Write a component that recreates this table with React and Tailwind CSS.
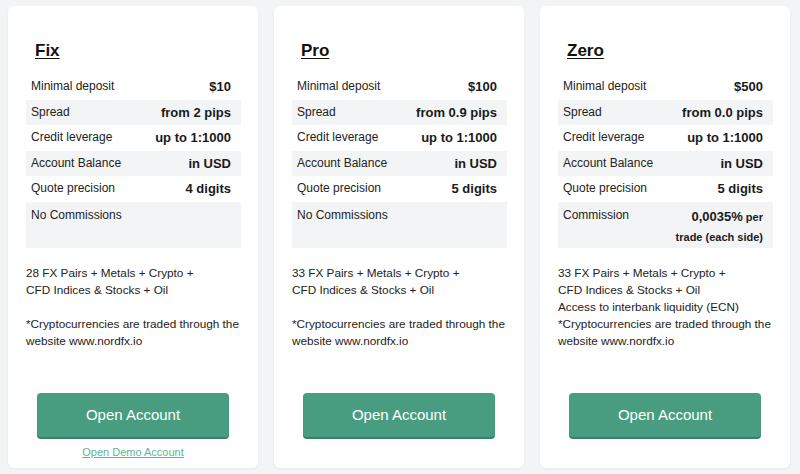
const plans = [
  {
    name: "Fix",
    deposit: "$10",
    spread: "from 2 pips",
    digits: "4 digits",
    commission: null,
    lines: ["28 FX Pairs + Metals + Crypto +", "CFD Indices & Stocks + Oil", ""],
    demo: true,
  },
  {
    name: "Pro",
    deposit: "$100",
    spread: "from 0.9 pips",
    digits: "5 digits",
    commission: null,
    lines: ["33 FX Pairs + Metals + Crypto +", "CFD Indices & Stocks + Oil", ""],
    demo: false,
  },
  {
    name: "Zero",
    deposit: "$500",
    spread: "from 0.0 pips",
    digits: "5 digits",
    commission: true,
    lines: [
      "33 FX Pairs + Metals + Crypto +",
      "CFD Indices & Stocks + Oil",
      "Access to interbank liquidity (ECN)",
    ],
    demo: false,
  },
];

function Row({ label, value, gray }) {
  return (
    <div
      className={
        "flex justify-between items-start h-[25.5px] pl-[5px] pr-[10px] pt-[5px] " +
        (gray ? "bg-[#f3f4f6]" : "")
      }
    >
      <span className="text-[12px] leading-[15px] text-[#222]">{label}</span>
      <span className="text-[13px] leading-[15px] font-bold text-[#1a1a1a]">{value}</span>
    </div>
  );
}

function Card({ plan }) {
  return (
    <div className="w-[250px] h-[462px] bg-white rounded-[6px] shadow-[0_1px_3px_rgba(0,0,0,0.05)] flex flex-col pt-[35px] px-[18px]">
      <h2 className="ml-[9px] text-[17px] leading-[20px] font-bold underline underline-offset-2 text-[#111]">
        {plan.name}
      </h2>

      <div className="mt-[13px] w-[215px]">
        <Row label="Minimal deposit" value={plan.deposit} />
        <Row label="Spread" value={plan.spread} gray />
        <Row label="Credit leverage" value="up to 1:1000" />
        <Row label="Account Balance" value="in USD" gray />
        <Row label="Quote precision" value={plan.digits} />
        <div className="flex justify-between items-start h-[46px] pl-[5px] pr-[10px] pt-[6px] bg-[#f3f4f6]">
          <span className="text-[12px] leading-[15px] text-[#222]">
            {plan.commission ? "Commission" : "No Commissions"}
          </span>
          {plan.commission && (
            <span className="text-right font-bold text-[#1a1a1a]">
              <span className="block leading-[15px]">
                <span className="text-[13px]">0,0035%</span>
                <span className="text-[11px]"> per</span>
              </span>
              <span className="block mt-[5px] text-[11px] leading-[15px]">trade (each side)</span>
            </span>
          )}
        </div>
      </div>

      <div className="mt-[16px] text-[11.75px] leading-[17px] text-[#222] whitespace-nowrap">
        {plan.lines.map((l, i) => (
          <div key={i} className="h-[17px]">
            {l}
          </div>
        ))}
        <div>*Cryptocurrencies are traded through the</div>
        <div>website www.nordfx.io</div>
      </div>

      <div className="mt-auto flex flex-col items-center pb-[9px]">
        <button className="w-[192px] h-[44px] rounded-[4px] bg-[#489d80] text-white text-[15px] shadow-[0_2px_0_#3a7f67]">
          Open Account
        </button>
        <div className="h-[22px] pt-[8px]">
          {plan.demo && (
            <a className="block text-[11px] leading-[14px] text-[#62b396] underline">Open Demo Account</a>
          )}
        </div>
      </div>
    </div>
  );
}

export default function App() {
  return (
    <div
      className="min-h-[474px] bg-[#f3f4f5] pt-[6px] pl-[8px] flex gap-[16px]"
      style={{ fontFamily: '"Liberation Sans", Arial, sans-serif' }}
    >
      {plans.map((p) => (
        <Card key={p.name} plan={p} />
      ))}
    </div>
  );
}
